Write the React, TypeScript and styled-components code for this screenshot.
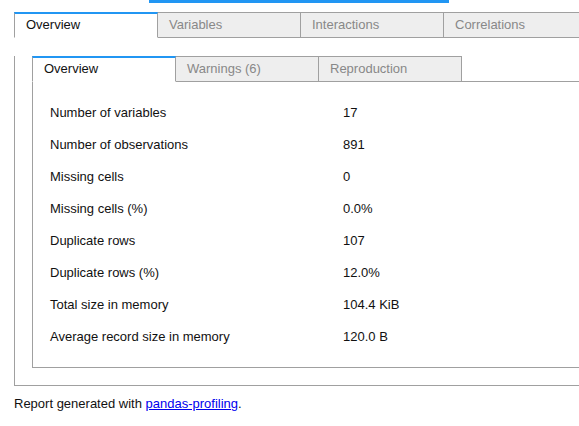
import React from "react";
import styled, { createGlobalStyle } from "styled-components";

const Global = createGlobalStyle`
  html, body {
    margin: 0;
    padding: 0;
    overflow: hidden;
    background: #fff;
  }
  body {
    font-family: "Liberation Sans", Arial, sans-serif;
    font-size: 13px;
    color: #222;
  }
`;

const Page = styled.div`
  width: 620px;
  padding-left: 14px;
  box-sizing: border-box;
`;

const TopBar = styled.div`
  width: 300px;
  height: 3px;
  margin-left: 135px;
  background: #2196f3;
`;

const TabList = styled.div<{ $top: number }>`
  display: flex;
  margin-top: ${(p) => p.$top}px;
  border-bottom: 1px solid #a0a0a0;
`;

const Tab = styled.div<{ $active?: boolean }>`
  position: relative;
  box-sizing: border-box;
  width: 144px;
  height: 26px;
  margin-bottom: -1px;
  padding: 0 0 2px 11px;
  display: flex;
  align-items: center;
  flex-shrink: 0;
  white-space: nowrap;
  border: 1px solid #a0a0a0;
  background: ${(p) => (p.$active ? "#fff" : "#eee")};
  color: ${(p) => (p.$active ? "#111" : "#888")};
  ${(p) =>
    p.$active
      ? `border-top: 2px solid #2196f3; border-bottom-color: #fff; z-index: 1; padding-bottom: 3px;`
      : ``}
  & + & {
    margin-left: -1px;
  }
`;

const OuterPane = styled.div`
  border: 1px solid #a0a0a0;
  border-top: none;
  padding: 0 17px 17px 17px;
`;

const InnerPane = styled.div`
  border: 1px solid #a0a0a0;
  border-top: none;
  padding: 14px 0 15px 17px;
`;

const Row = styled.div`
  display: grid;
  grid-template-columns: 293px 1fr;
  height: 32px;
  align-items: center;
  color: #111;
`;

const Footer = styled.p`
  margin: 10px 0 0 0;
  line-height: 15px;
  color: #111;
  a {
    color: #0000ee;
    text-decoration: underline;
  }
`;

const outerTabs = ["Overview", "Variables", "Interactions", "Correlations"];
const innerTabs = ["Overview", "Warnings (6)", "Reproduction"];

const stats: [string, string][] = [
  ["Number of variables", "17"],
  ["Number of observations", "891"],
  ["Missing cells", "0"],
  ["Missing cells (%)", "0.0%"],
  ["Duplicate rows", "107"],
  ["Duplicate rows (%)", "12.0%"],
  ["Total size in memory", "104.4 KiB"],
  ["Average record size in memory", "120.0 B"],
];

export default function App() {
  return (
    <>
      <Global />
      <Page>
        <TopBar />
        <TabList $top={9}>
          {outerTabs.map((t, i) => (
            <Tab key={t} $active={i === 0}>
              {t}
            </Tab>
          ))}
        </TabList>
        <OuterPane>
          <TabList $top={18}>
            {innerTabs.map((t, i) => (
              <Tab key={t} $active={i === 0}>
                {t}
              </Tab>
            ))}
          </TabList>
          <InnerPane>
            {stats.map(([k, v]) => (
              <Row key={k}>
                <span>{k}</span>
                <span>{v}</span>
              </Row>
            ))}
          </InnerPane>
        </OuterPane>
        <Footer>
          Report generated with <a href="#">pandas-profiling</a>.
        </Footer>
      </Page>
    </>
  );
}
